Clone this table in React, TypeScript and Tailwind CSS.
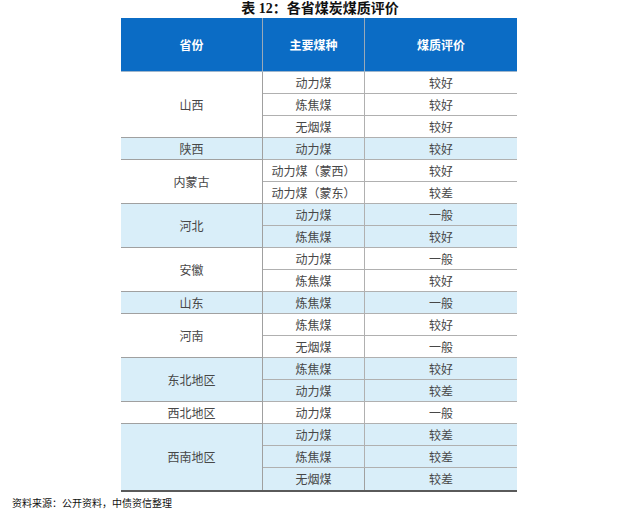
import React from "react";

type Group = { prov: string; rows: [string, string][]; blue: boolean };

const groups: Group[] = [
  { prov: "山西", blue: false, rows: [["动力煤", "较好"], ["炼焦煤", "较好"], ["无烟煤", "较好"]] },
  { prov: "陕西", blue: true, rows: [["动力煤", "较好"]] },
  { prov: "内蒙古", blue: false, rows: [["动力煤（蒙西）", "较好"], ["动力煤（蒙东）", "较差"]] },
  { prov: "河北", blue: true, rows: [["动力煤", "一般"], ["炼焦煤", "较好"]] },
  { prov: "安徽", blue: false, rows: [["动力煤", "一般"], ["炼焦煤", "较好"]] },
  { prov: "山东", blue: true, rows: [["炼焦煤", "一般"]] },
  { prov: "河南", blue: false, rows: [["炼焦煤", "较好"], ["无烟煤", "一般"]] },
  { prov: "东北地区", blue: true, rows: [["炼焦煤", "较好"], ["动力煤", "较差"]] },
  { prov: "西北地区", blue: false, rows: [["动力煤", "一般"]] },
  { prov: "西南地区", blue: true, rows: [["动力煤", "较差"], ["炼焦煤", "较差"], ["无烟煤", "较差"]] },
];

const spanClass: Record<number, string> = {
  1: "row-span-1",
  2: "row-span-2",
  3: "row-span-3",
};

export default function App() {
  return (
    <div
      className="w-[640px] h-[513px] bg-white flex flex-col"
      style={{ fontFamily: '"Noto Sans CJK SC", "Noto Sans", sans-serif' }}
    >
      <div
        className="h-[18px] flex items-center justify-center text-[14px] font-bold text-[#111] leading-none"
        style={{ fontFamily: '"Liberation Serif", "Noto Sans CJK SC", serif' }}
      >
        表 12：各省煤炭煤质评价
      </div>
      <div className="ml-[121px] w-[396px] border-b-2 border-[#5a5a5a]">
        <div className="grid grid-cols-[142px_102px_152px] h-[54px] bg-[#0b6cc5] text-white text-[12px] font-bold border-b border-[#9fb6cc]">
          <div className="flex items-center justify-center border-r border-[#9aa9b8]">省份</div>
          <div className="flex items-center justify-center border-r border-[#9aa9b8]">主要煤种</div>
          <div className="flex items-center justify-center">煤质评价</div>
        </div>
        {groups.map((g, gi) => {
          const last = gi === groups.length - 1;
          return (
            <div
              key={g.prov}
              className={`grid grid-cols-[142px_102px_152px] auto-rows-[22px] text-[12px] text-[#474747] ${
                g.blue ? "bg-[#d9eef9]" : "bg-white"
              }`}
            >
              <div
                className={`${spanClass[g.rows.length]} flex items-center justify-center border-r border-[#a0a0a0] ${
                  last ? "" : "border-b border-[#a0a0a0]"
                }`}
              >
                {g.prov}
              </div>
              {g.rows.map((r, ri) => {
                const bottom = !(last && ri === g.rows.length - 1);
                return (
                  <React.Fragment key={ri}>
                    <div
                      className={`flex items-center justify-center border-r border-[#a0a0a0] ${
                        bottom ? "border-b border-[#b0b0b0]" : ""
                      }`}
                    >
                      {r[0]}
                    </div>
                    <div
                      className={`flex items-center justify-center ${
                        bottom ? "border-b border-[#b0b0b0]" : ""
                      }`}
                    >
                      {r[1]}
                    </div>
                  </React.Fragment>
                );
              })}
            </div>
          );
        })}
      </div>
      <div className="pl-[12px] pt-[4px] text-[10px] leading-[14px] text-[#111]">
        资料来源：公开资料，中债资信整理
      </div>
    </div>
  );
}
